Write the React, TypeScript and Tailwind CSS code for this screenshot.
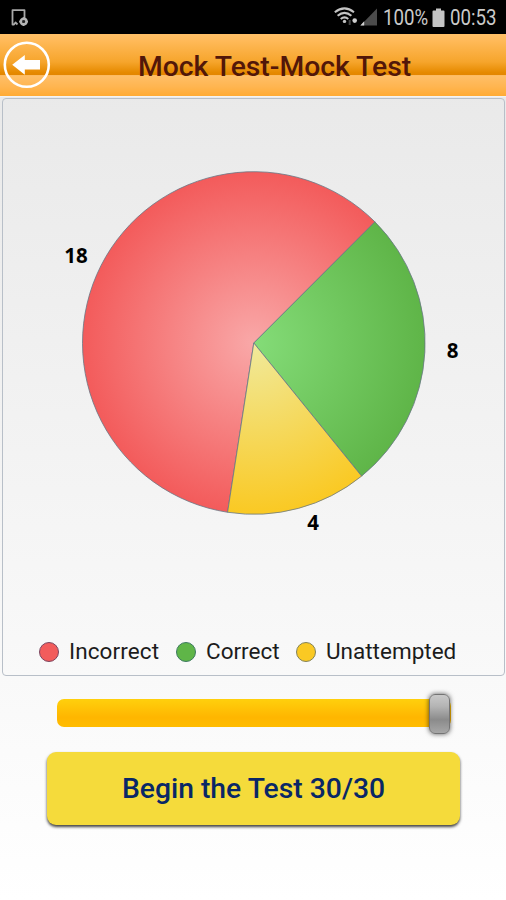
import React from 'react';

const slices = [
  { label: 'Incorrect', value: 18, inner: '#f9a8a8', outer: '#f35b5b', from: 98.8, to: 315, x: 76, y: 262.5 },
  { label: 'Correct', value: 8, inner: '#84dc78', outer: '#5fb548', from: -45, to: 51, x: 452.5, y: 357.5 },
  { label: 'Unattempted', value: 4, inner: '#f0ea9c', outer: '#fac923', from: 51, to: 98.8, x: 313, y: 529.5 },
];

const CX = 253.8;
const CY = 343;
const R = 171.3;

const point = (deg: number) => {
  const rad = (deg * Math.PI) / 180;
  return `${(CX + R * Math.cos(rad)).toFixed(2)} ${(CY + R * Math.sin(rad)).toFixed(2)}`;
};

const StatusBar = () => {
  return <div className="flex h-[34px] items-center bg-black text-[#c9c9c9]">
      <svg className="ml-[10px] h-[34px] w-5" viewBox="0 -8 20 34" fill="none">
        <path d="M7.5 16.5L5.5 14.5L4 16.5H2.5V2.2H14.500V10" stroke="#a9a9a9" strokeWidth="1.8" strokeLinejoin="round" />
        <circle cx="13.6" cy="13.6" r="2.9" stroke="#b5b5b5" strokeWidth="2.4" />
        <path d="M13.6 9.2v8.8M9.2 13.6H18" stroke="#b5b5b5" strokeWidth="1.6" />
        <circle cx="13.6" cy="13.6" r="1.5" fill="#222" />
      </svg>
      <svg className="ml-auto h-[34px] w-[46px]" viewBox="332 0 46 34" fill="none">
        <path d="M333.8 12.2Q343.500 4.6 353 12.2M336.600 15.700Q343.500 10 350.400 15.700M339.700 19Q343.500 15.800 347.300 19" stroke="#c4c4c4" strokeWidth="2" />
        <circle cx="343.5" cy="21.4" r="1.7" fill="#c4c4c4" />
        <path d="M348.7 20v5" stroke="#444" strokeWidth="2" />
        <circle cx="353.7" cy="20.6" r="2.3" fill="#cfcfcf" />
        <path d="M376 8.5V25.5H359.5Z" fill="#4b4b4b" />
        <path d="M363.2 21.3V25.5H359.3Z" fill="#d0d0d0" />
      </svg>
      <span className="ml-[4px] w-[44px] origin-left scale-x-[0.87] whitespace-nowrap pt-[3px] text-[21.5px]">100%</span>
      <svg className="ml-[5px] h-[19px] w-[13px]" viewBox="0 0 13 19">
        <path d="M4 0.5h5v2h2.5q1 0 1 1V18q0 1-1 1h-10q-1 0-1-1V3.5q0-1 1-1H4z" fill="#c4c4c4" />
      </svg>
      <span className="mr-[9px] ml-[5px] w-[47px] origin-left scale-x-[0.87] whitespace-nowrap pt-[3px] text-[21.5px]">00:53</span>
    </div>;
};

const Header = () => {
  return <header className="flex h-[62px] items-center bg-[linear-gradient(to_bottom,#ffc069_0%,#ffb957_12%,#f6a52c_45%,#e68a00_62%,#e38600_66%,#ffbf68_67%,#ffb550_85%,#ffab35_100%)]">
      <svg className="ml-[3px] h-12 w-12 shrink-0" viewBox="0 0 48 48">
        <circle cx="23.8" cy="23.8" r="22" fill="none" stroke="#fff" strokeWidth="2.6" />
        <path d="M9.2 23.8L21.8 14V19H37V28.6H21.8V33.8Z" fill="#fff" />
      </svg>
      <h1 className="ml-[87px] whitespace-nowrap pt-[5px] text-[28.3px] font-medium text-[#521709]">Mock Test-Mock Test</h1>
    </header>;
};

const PieChart = () => {
  return <svg className="block h-[528px] w-[501px]" viewBox="3 99 501 528">
      <defs>
        {slices.map(s => <radialGradient key={s.label} id={`fill-${s.label}`} gradientUnits="userSpaceOnUse" cx={CX} cy={CY} r={R}>
            <stop offset="0" stopColor={s.inner} />
            <stop offset="1" stopColor={s.outer} />
          </radialGradient>)}
      </defs>
      {slices.map(s => <path key={s.label} d={`M${CX} ${CY}L${point(s.from)}A${R} ${R} 0 ${s.to - s.from > 180 ? 1 : 0} 1 ${point(s.to)}Z`} fill={`url(#fill-${s.label})`} stroke="#687785" strokeWidth="0.8" strokeLinejoin="round" />)}
      {slices.map(s => <text key={s.label} x={s.x} y={s.y} textAnchor="middle" fill="#000" className="font-['Noto_Sans',sans-serif] text-[20.5px] font-bold">{s.value}</text>)}
    </svg>;
};

const Legend = () => {
  return <div className="flex h-[49px] items-center pl-[36px] text-[22.5px] text-[#1c1c1c]">
      <span className="h-5 w-5 rounded-full border border-[#7b4660] bg-[#f25c5c]" />
      <span className="ml-[10px] w-[107px] pt-px tracking-[0.1px]">Incorrect</span>
      <span className="h-5 w-5 rounded-full border border-[#3d7a60] bg-[#5fb548]" />
      <span className="ml-[10px] w-[90px] pt-px">Correct</span>
      <span className="h-5 w-5 rounded-full border border-[#82825a] bg-[#fac923]" />
      <span className="ml-[10px] pt-px">Unattempted</span>
    </div>;
};

const Slider = () => {
  return <div className="relative mt-[23px] ml-[57px] h-7 w-[394px] rounded-[7px] bg-[linear-gradient(to_bottom,#ffd00d,#ffb600_65%,#ffbc00)]">
      <div className="absolute -top-[5px] left-[372px] h-10 w-[21px] rounded-[6px] border-[1.5px] border-[#747474] bg-[linear-gradient(to_bottom,#c9c9c9,#b4b4b4_30%,#8b8b8b_65%,#a7a7a7)] shadow-[0_0_5px_rgba(0,0,0,0.65)]" />
    </div>;
};

export default function App() {
  return <div className="flex h-[900px] w-[506px] flex-col overflow-hidden bg-gradient-to-b from-[#e7e7e7] to-white font-['Roboto',sans-serif]">
      <StatusBar />
      <Header />
      <main>
        <div className="h-px bg-[#f2f3f4]" />
        <section className="mt-px ml-[2px] h-[578px] w-[503px] rounded-[4px] border border-[#b8bfc8]">
          <PieChart />
          <Legend />
        </section>
        <Slider />
        <button className="mt-[25px] ml-[47px] flex h-[73px] w-[413px] items-center justify-center rounded-[9px] bg-[#f5db3b] pt-[2px] text-[28.3px] font-medium text-[#092766] shadow-[0_2px_3px_rgba(0,0,0,0.75)]">
          Begin the Test 30/30
        </button>
      </main>
    </div>;
}
